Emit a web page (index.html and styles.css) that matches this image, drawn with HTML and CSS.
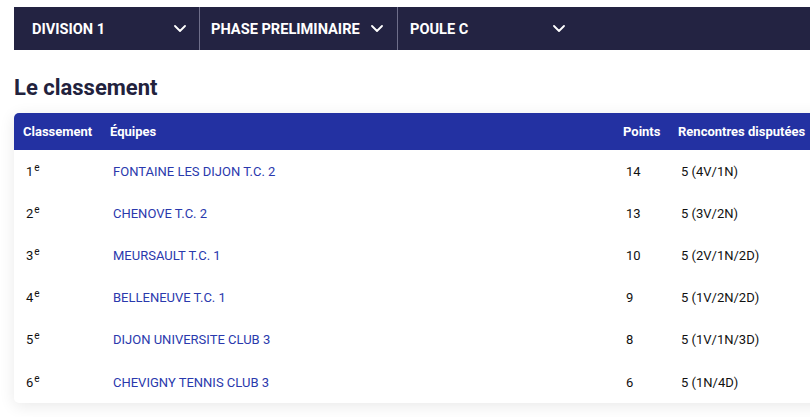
FILE: index.html
```html
<!DOCTYPE html>
<html lang="fr">
<head>
<meta charset="utf-8">
<title>Le classement</title>
<link rel="stylesheet" href="styles.css">
</head>
<body>
<div class="page">
  <nav class="filters">
    <div class="filter f1"><span>DIVISION 1</span><svg class="chev" width="12" height="7" viewBox="0 0 12 7"><polyline points="1,1 6,6 11,1"/></svg></div>
    <div class="filter f2"><span>PHASE PRELIMINAIRE</span><svg class="chev" width="12" height="7" viewBox="0 0 12 7"><polyline points="1,1 6,6 11,1"/></svg></div>
    <div class="filter f3"><span>POULE C</span><svg class="chev" width="12" height="7" viewBox="0 0 12 7"><polyline points="1,1 6,6 11,1"/></svg></div>
  </nav>
  <h2 class="title">Le classement</h2>
  <div class="card">
    <div class="row head">
      <div class="cell">Classement</div>
      <div class="cell">Équipes</div>
      <div class="cell">Points</div>
      <div class="cell">Rencontres disputées</div>
    </div>
    <div class="row">
      <div class="cell">1<sup>e</sup></div>
      <div class="cell team">FONTAINE LES DIJON T.C. 2</div>
      <div class="cell">14</div>
      <div class="cell">5 (4V/1N)</div>
    </div>
    <div class="row">
      <div class="cell">2<sup>e</sup></div>
      <div class="cell team">CHENOVE T.C. 2</div>
      <div class="cell">13</div>
      <div class="cell">5 (3V/2N)</div>
    </div>
    <div class="row">
      <div class="cell">3<sup>e</sup></div>
      <div class="cell team">MEURSAULT T.C. 1</div>
      <div class="cell">10</div>
      <div class="cell">5 (2V/1N/2D)</div>
    </div>
    <div class="row">
      <div class="cell">4<sup>e</sup></div>
      <div class="cell team">BELLENEUVE T.C. 1</div>
      <div class="cell">9</div>
      <div class="cell">5 (1V/2N/2D)</div>
    </div>
    <div class="row">
      <div class="cell">5<sup>e</sup></div>
      <div class="cell team">DIJON UNIVERSITE CLUB 3</div>
      <div class="cell">8</div>
      <div class="cell">5 (1V/1N/3D)</div>
    </div>
    <div class="row">
      <div class="cell">6<sup>e</sup></div>
      <div class="cell team">CHEVIGNY TENNIS CLUB 3</div>
      <div class="cell">6</div>
      <div class="cell">5 (1N/4D)</div>
    </div>
  </div>
</div>
</body>
</html>
```

FILE: styles.css
```css
html, body {
  margin: 0;
  padding: 0;
  background: #ffffff;
  overflow: hidden;
}
body {
  font-family: Roboto, "Liberation Sans", Arial, sans-serif;
  color: #111111;
}
.page {
  padding: 7px 0 20px 14px;
  width: 830px;
}
.filters {
  display: flex;
  height: 43px;
  background: #232342;
  color: #ffffff;
}
.filter {
  display: flex;
  align-items: center;
  justify-content: space-between;
  font-size: 14.6px;
  font-weight: 700;
  box-sizing: border-box;
  padding-right: 13px;
}
.f1 {
  width: 186px;
  padding-left: 18px;
  border-right: 1px solid #6e6e8a;
}
.f2 {
  width: 198px;
  padding-left: 11px;
  padding-right: 14px;
  border-right: 1px solid #6e6e8a;
}
.f3 {
  width: 180px;
  padding-left: 12px;
  padding-right: 13px;
}
.chev {
  display: block;
  flex: none;
}
.chev polyline {
  fill: none;
  stroke: #ffffff;
  stroke-width: 1.8;
  stroke-linecap: round;
  stroke-linejoin: round;
}
.title {
  margin: 24px 0 0 0;
  font-size: 22px;
  line-height: 28px;
  font-weight: 700;
  color: #22223d;
  height: 39px;
}
.card {
  width: 830px;
  background: #ffffff;
  border-radius: 5px;
  overflow: hidden;
  box-shadow: 0 3px 16px rgba(0, 0, 0, 0.09);
}
.row {
  display: grid;
  grid-template-columns: 87px 513px 55px 1fr;
  align-items: center;
  height: 42.2px;
  font-size: 13px;
}
.row .cell {
  padding-left: 12px;
}
.row.head {
  height: 37px;
  background: #2331a2;
  color: #ffffff;
  font-weight: 700;
}
.row.head .cell {
  padding-left: 9px;
}
.team {
  color: #2a39ad;
}
sup {
  font-size: 10px;
  line-height: 0;
  vertical-align: 0;
  position: relative;
  top: -5px;
  margin-left: 1px;
}
```
